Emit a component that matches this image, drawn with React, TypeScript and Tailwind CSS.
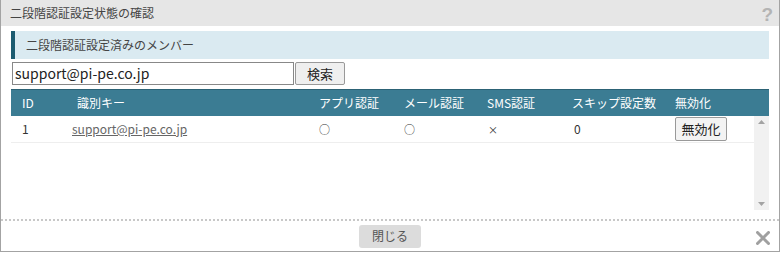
const cols = ['w-[55px]', 'w-[242px]', 'w-[85px]', 'w-[83px]', 'w-[85px]', 'w-[103px]', 'flex-1'];

const headers = ['ID', '識別キー', 'アプリ認証', 'メール認証', 'SMS認証', 'スキップ設定数', '無効化'];

export default function App() {
  return (
    <div
      className="w-[780px] h-[254px] bg-white text-[#333]"
      style={{ fontFamily: '"Noto Sans CJK JP", "Noto Sans", sans-serif' }}
    >
      <div className="h-[252px] flex flex-col border-l border-r border-b border-[#a3a3a3]">
        {/* title bar */}
        <div className="h-[26px] bg-[#e6e6e6] flex items-center justify-between pl-[9px] pr-[6px]">
          <span className="text-[12px] leading-none text-[#444]">二段階認証設定状態の確認</span>
          <span className="text-[19px] leading-none text-[#b4b4b4] font-semibold mt-[3px]" style={{ fontFamily: '"Liberation Sans", sans-serif' }}>?</span>
        </div>

        <div className="flex-1 flex flex-col px-[10px] pt-[5px]">
          {/* section header */}
          <div className="h-[28px] bg-[#daeaf1] border-l-4 border-[#1b5b70] flex items-center pl-[11px]">
            <span className="text-[12px] text-[#444]">二段階認証設定済みのメンバー</span>
          </div>

          {/* search */}
          <div className="flex mt-[3px] pl-[1px] gap-[1px]">
            <div className="w-[282px] h-[23px] border border-[#888] flex items-center pl-[2px] text-[14px] text-[#222]">
              support@pi-pe.co.jp
            </div>
            <button className="w-[50px] h-[23px] border border-[#999] rounded-[2px] bg-[#efefef] text-[13px] text-[#222]">
              検索
            </button>
          </div>

          {/* table header */}
          <div className="mt-[4px] h-[27px] bg-[#3b7c93] border-t border-[#2c6275] flex items-center text-white text-[12px]">
            {headers.map((h, i) => (
              <div key={h} className={`${cols[i]} pl-[11px]`}>
                {h}
              </div>
            ))}
          </div>

          {/* body */}
          <div className="flex h-[94px]">
            <div className="flex-1">
              <div className="h-[27px] border-b border-[#eeeeee] flex items-center text-[12px]">
                <div className="w-[55px] pl-[11px]">1</div>
                <div className="w-[242px] pl-[6px]">
                  <span className="underline text-[#666]">support@pi-pe.co.jp</span>
                </div>
                <div className="w-[85px] pl-[11px] text-[11px]">○</div>
                <div className="w-[83px] pl-[11px] text-[11px]">○</div>
                <div className="w-[85px] pl-[12px] text-[10px]">×</div>
                <div className="w-[103px] pl-[13px]">0</div>
                <div className="flex-1 pl-[11px]">
                  <button className="w-[52px] h-[24px] border border-[#999] rounded-[2px] bg-[#f3f3f3] text-[13px] text-[#222]">
                    無効化
                  </button>
                </div>
              </div>
            </div>
            <div className="w-[15px] bg-[#f1f1f1] flex flex-col justify-between items-center py-[4px]">
              <svg width="7" height="4" viewBox="0 0 7 4"><path d="M0 4 L3.5 0 L7 4 Z" fill="#a3a3a3" /></svg>
              <svg width="7" height="4" viewBox="0 0 7 4"><path d="M0 0 L3.5 4 L7 0 Z" fill="#a3a3a3" /></svg>
            </div>
          </div>
        </div>

        {/* footer */}
        <div className="h-[32px] border-t-2 border-dotted border-[#c8c8c8] flex items-center justify-center relative">
          <button className="w-[62px] h-[23px] rounded-[3px] bg-[#dcdcdc] text-[12px] text-[#555]">閉じる</button>
          <svg className="absolute right-[9px] top-[10px]" width="14" height="14" viewBox="0 0 14 14">
            <path d="M1.5 1.5 L12.5 12.5 M12.5 1.5 L1.5 12.5" stroke="#a0a0a0" strokeWidth="3" strokeLinecap="round" />
          </svg>
        </div>
      </div>
    </div>
  );
}
